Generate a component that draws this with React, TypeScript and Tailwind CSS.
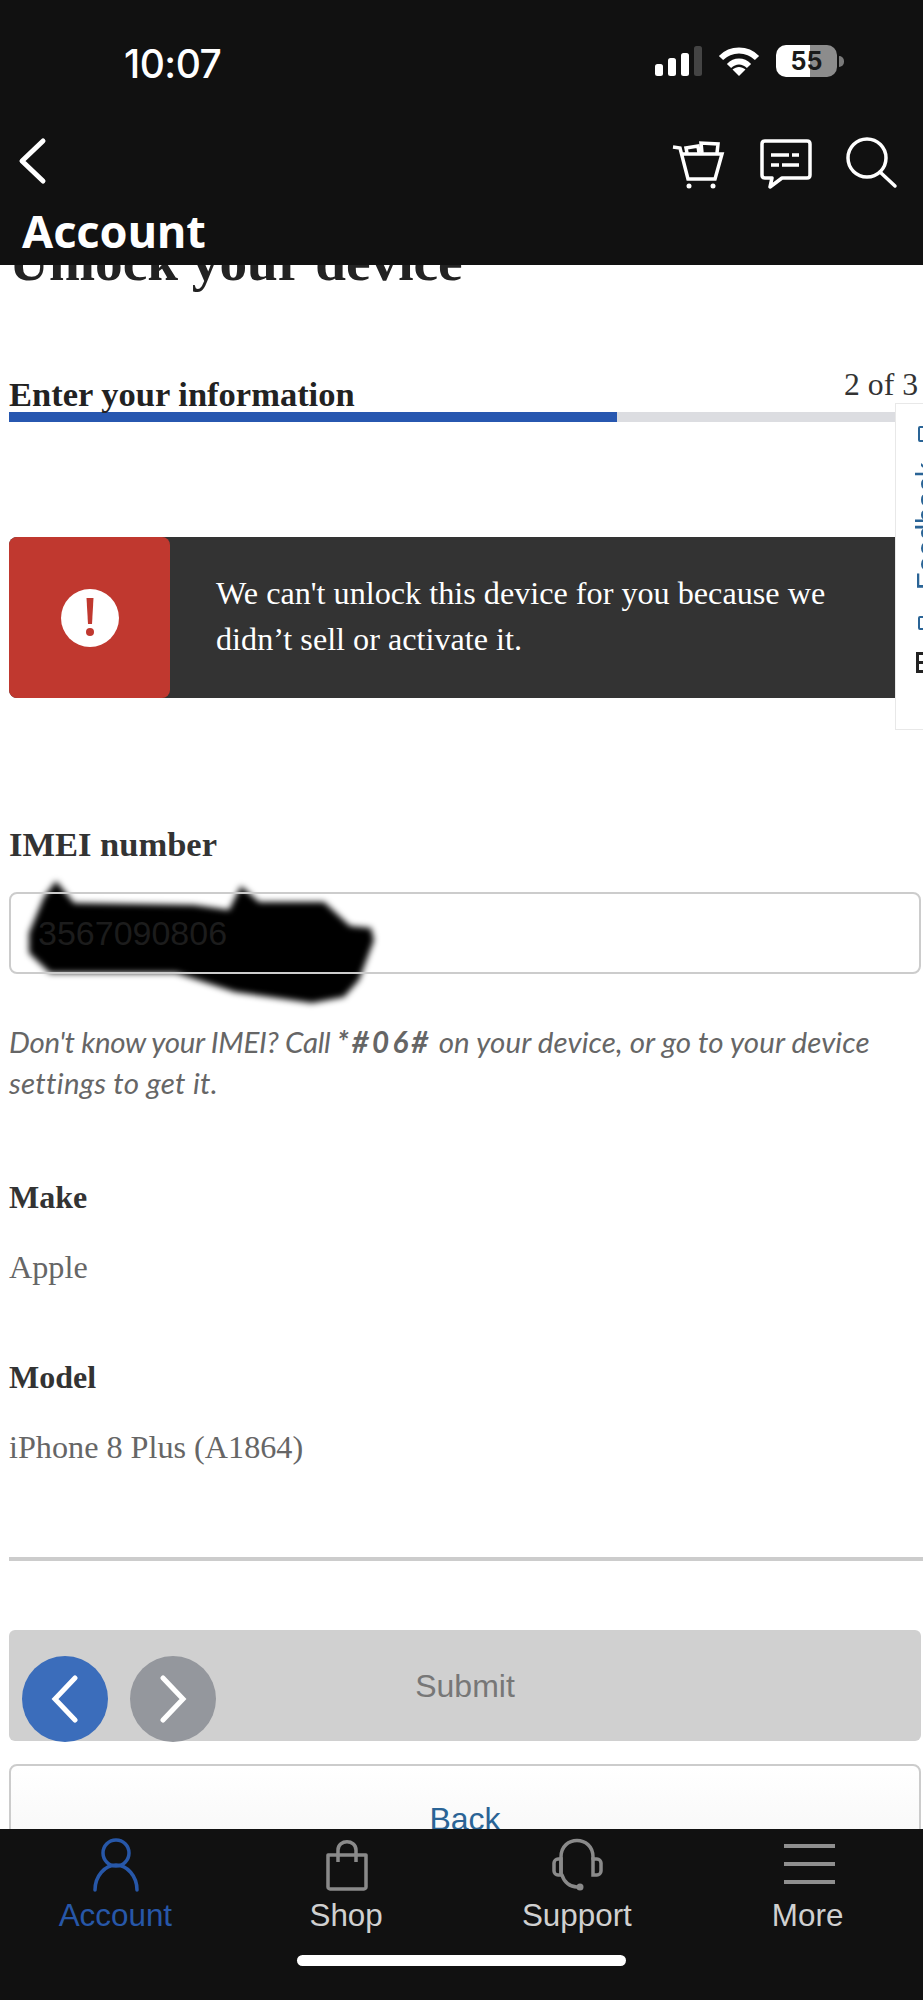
const serif = "font-['Liberation_Serif',serif]";

function StatusIcons() {
  return (
    <div className="flex items-start">
      <svg width="48" height="31" viewBox="0 0 48 31" className="mt-[1px]" fill="#fff">
        <rect x="0" y="18" width="8" height="12" rx="2.5" />
        <rect x="13" y="12" width="8" height="18" rx="2.5" />
        <rect x="26" y="7" width="8" height="23" rx="2.5" />
        <rect x="39" y="0" width="8" height="30" rx="2.5" fill="#444" />
      </svg>
      <svg width="42" height="30" viewBox="0 0 42 30" fill="none" stroke="#fff" strokeWidth="6" className="ml-[15px] mt-[1px]">
        <path d="M3 12C13 2 29 2 39 12" />
        <path d="M11 20C17 14 25 14 31 20" />
        <path d="M14.5 23.5L21 30L27.5 23.5C23.5 20 18.500 20 14.5 23.5Z" fill="#fff" stroke="none" />
      </svg>
      <div className="ml-[16px] flex items-center">
        <div className="flex h-[32px] w-[61px] items-center justify-center rounded-[10px] bg-[linear-gradient(90deg,#fff_0,#fff_56%,#8c8c8c_56%,#8c8c8c_100%)] font-['Inter',sans-serif] text-[25px] leading-none font-bold text-[#1a1a1a]">
          55
        </div>
        <div className="ml-[2px] h-[11px] w-[5px] rounded-r-full bg-[#7a7a7a]" />
      </div>
    </div>
  );
}

function Header() {
  return (
    <header className="relative z-20 h-[265px] shrink-0 bg-[#111] text-white">
      <div className="flex items-start justify-between pt-[45px] pr-[79px] pl-[124px]">
        <span className="mt-[2px] font-['Inter',sans-serif] text-[39px] leading-[34px] font-medium tracking-[-0.5px]">10:07</span>
        <StatusIcons />
      </div>
      <div className="mt-[56px] flex items-start justify-between pr-[23px] pl-[17px]">
        <svg width="32" height="48" viewBox="0 0 32 48" fill="none" stroke="#fff" strokeWidth="5" strokeLinecap="round" strokeLinejoin="round">
          <path d="M26 4L5 24L26 44" />
        </svg>
        <div className="flex items-start">
          <svg width="56" height="54" viewBox="0 0 56 54" fill="none" stroke="#fff" strokeWidth="3.500">
            <path d="M3 10L10 11L18 42H45L52 17H12" />
            <path d="M17 16L16 11L28 9L29 16" />
            <path d="M32 16L31 6L48 7L47 16" />
            <circle cx="19" cy="49" r="2.500" fill="#fff" stroke="none" />
            <circle cx="43" cy="49" r="2.500" fill="#fff" stroke="none" />
          </svg>
          <svg width="54" height="54" viewBox="0 0 54 54" fill="none" stroke="#fff" strokeWidth="3.500" strokeLinejoin="round" className="ml-[32px]">
            <path d="M7 4H49C51 4 52 5 52 7V38C52 40 51 41 49 41H24L12 50L14 41H7C5 41 4 40 4 38V7C4 5 5 4 7 4Z" />
            <path d="M13 18H31M34 18H41M13 28H21M24 28H41" />
          </svg>
          <svg width="54" height="54" viewBox="0 0 54 54" fill="none" stroke="#fff" strokeWidth="3.500" strokeLinecap="round" className="ml-[34px]">
            <circle cx="21" cy="21" r="19" />
            <path d="M34 35L49 49" />
          </svg>
        </div>
      </div>
      <div className="mt-[15px] pl-[22px] font-['Noto_Sans',sans-serif] text-[45px] leading-[50px] font-bold">Account</div>
    </header>
  );
}

function FeedbackTab() {
  return (
    <div className="absolute top-[403px] right-0 z-10 h-[327px] w-[28px] overflow-hidden border-y border-l border-[#e8e8e8] bg-white">
      <div className="absolute top-0 bottom-0 left-[9px] flex w-[44px] rotate-180 items-center [writing-mode:vertical-rl]">
        <div className="h-[56px] shrink-0" />
        <div className="relative h-[21px] w-[22px] shrink-0 border-[3px] border-[#222]">
          <div className="absolute top-[6px] left-[12px] h-[3px] w-[6px] bg-[#222]" />
        </div>
        <div className="h-[22px] shrink-0" />
        <div className="h-[14px] w-[18px] shrink-0 rounded-[2px] border-[2.5px] border-[#2a6496]" />
        <div className="h-[26px] shrink-0" />
        <span className="font-['Liberation_Sans',sans-serif] text-[29px] leading-[44px] text-[#2a6496]">Feedback</span>
        <div className="h-[21px] shrink-0" />
        <div className="h-[16px] w-[18px] shrink-0 rounded-[2px] border-[2.5px] border-[#2a6496]" />
      </div>
    </div>
  );
}

function Scribble() {
  return (
    <svg width="370" height="145" viewBox="0 0 370 145" className="absolute top-[870px] left-[20px] blur-[3px]" fill="#000">
      <path d="M36 11L54 33L174 35L209 40L221 16L239 32L304 32L330 56L351 58L354 70L339 110L324 127L292 133L215 122L156 103L30 103L9 83L9 63L24 27Z" />
    </svg>
  );
}

function Field({ label, value }: { label: string; value: string }) {
  return (
    <>
      <div className="mt-[78px] text-[32px] leading-[32px] font-bold text-[#333]">{label}</div>
      <div className="mt-[38px] text-[32.2px] leading-[32px] text-[#666]">{value}</div>
    </>
  );
}

function Main() {
  return (
    <main className={`min-h-0 flex-1 overflow-hidden bg-white pr-[2px] pl-[9px] ${serif}`}>
      <h1 className="mt-[-31px] text-[55.3px] leading-[56px] font-bold text-[#222]">Unlock your device</h1>
      <div className="mt-[78px] flex h-[44px] items-start justify-between">
        <span className="mt-[9px] text-[34.5px] leading-[34px] font-bold text-[#222]">Enter your information</span>
        <span className="mr-[3px] text-[31.7px] leading-[34px] text-[#333]">2 of 3</span>
      </div>
      <div className="h-[10px] bg-[#dcdde1]">
        <div className="h-full w-[608px] bg-[#2757b0]" />
      </div>
      <div className="mt-[115px] flex h-[161px] rounded-l-[8px] bg-[#333] text-white">
        <div className="flex w-[161px] shrink-0 items-center justify-center rounded-[8px] bg-[#c0382f]">
          <div className="flex h-[58px] w-[58px] items-center justify-center rounded-full bg-white">
            <svg width="12" height="40" viewBox="0 0 12 40" fill="#c0382f">
              <path d="M2.500 0H9.500L8 26H4Z" />
              <circle cx="6" cy="34" r="4" />
            </svg>
          </div>
        </div>
        <p className="pt-[33px] pl-[46px] text-[32.2px] leading-[46px]">
          We can't unlock this device for you because we
          <br />
          didn’t sell or activate it.
        </p>
      </div>
      <div className="mt-[130px] text-[34.5px] leading-[32px] font-bold text-[#333]">IMEI number</div>
      <div className="relative z-10 mt-[32px] flex h-[82px] items-center rounded-[8px] border-2 border-[#ccc] pl-[27px] font-['Liberation_Sans',sans-serif] text-[34px] text-[#1c1c1c]">
        3567090806
      </div>
      <p className="mt-[47px] font-['Lato',sans-serif] text-[29.5px] leading-[41px] text-[#666] italic">
        <span className="tracking-[-0.33px]">Don't know your IMEI? Call </span>
        <b className="tracking-[3.2px]">*#06#</b>
        <span className="tracking-[0.1px]"> on your device, or go to your device</span>
        <br />
        <span className="tracking-[0.27px]">settings to get it.</span>
      </p>
      <Field label="Make" value="Apple" />
      <Field label="Model" value="iPhone 8 Plus (A1864)" />
      <div className="mt-[94px] mr-[-2px] h-[4px] bg-[#ccc]" />
      <div className="mt-[69px] flex h-[111px] items-start justify-center rounded-[6px] bg-[#d0d0d0] pt-[38px] font-['Liberation_Sans',sans-serif] text-[32px] leading-[36px] text-[#777]">
        Submit
      </div>
      <div className="mt-[23px] flex h-[110px] items-start justify-center rounded-[8px] border-2 border-[#ccc] bg-[linear-gradient(#fff,#f5f5f5)] pt-[35px] font-['Liberation_Sans',sans-serif] text-[32px] leading-[36px] text-[#2a6496]">
        Back
      </div>
    </main>
  );
}

function PageArrows() {
  return (
    <div className="absolute top-[1656px] left-[22px] z-10 flex gap-[22px]">
      <div className="flex h-[86px] w-[86px] items-center justify-center rounded-full bg-[#3b6dbb]">
        <svg width="32" height="48" viewBox="0 0 32 48" fill="none" stroke="#fff" strokeWidth="5" strokeLinecap="round">
          <path d="M26 3L6 24L26 45" />
        </svg>
      </div>
      <div className="flex h-[86px] w-[86px] items-center justify-center rounded-full bg-[#94979d]">
        <svg width="32" height="48" viewBox="0 0 32 48" fill="none" stroke="#fff" strokeWidth="5" strokeLinecap="round">
          <path d="M6 3L26 24L6 45" />
        </svg>
      </div>
    </div>
  );
}

function NavItem({ label, active, children }: { label: string; active?: boolean; children: React.ReactNode }) {
  return (
    <div className="flex flex-col items-center">
      {children}
      <span className={`mt-[6px] text-[31.4px] leading-[36px] ${active ? "text-[#2757a8]" : "text-[#d0d0d0]"}`}>{label}</span>
    </div>
  );
}

function BottomNav() {
  return (
    <nav className="relative z-20 h-[171px] shrink-0 bg-[#111] font-['Liberation_Sans',sans-serif]">
      <div className="grid grid-cols-4 pt-[8px]">
        <NavItem label="Account" active>
          <svg width="60" height="55" viewBox="0 0 60 55" fill="none" stroke="#2757a8" strokeWidth="3.500" strokeLinecap="round">
            <circle cx="31" cy="16" r="13" />
            <path d="M10 53C10 39 20 28 31 28C42 28 52 39 52 53" />
          </svg>
        </NavItem>
        <NavItem label="Shop">
          <svg width="60" height="55" viewBox="0 0 60 55" fill="none" stroke="#8a8a8a" strokeWidth="3.500" strokeLinejoin="round">
            <path d="M12 18H50V50C50 51 49 52 48 52H14C13 52 12 51 12 50Z" />
            <path d="M22 25V13C22 2 40 2 40 13V25" />
          </svg>
        </NavItem>
        <NavItem label="Support">
          <svg width="60" height="55" viewBox="0 0 60 55" fill="none" stroke="#8a8a8a" strokeWidth="3.500" strokeLinecap="round">
            <path d="M14 37V20C14 -2 46 -2 46 20V22" />
            <path d="M14 22H11C9 22 7 24 7 26V34C7 36 9 38 11 38H14Z" />
            <path d="M46 22H50C52 22 54 24 54 26V34C54 36 52 38 50 38H46Z" />
            <path d="M15 38C17 45 23 50 30 50" />
            <circle cx="33" cy="50" r="3.500" fill="#8a8a8a" stroke="none" />
          </svg>
        </NavItem>
        <NavItem label="More">
          <svg width="60" height="55" viewBox="0 0 60 55" fill="none" stroke="#8f8f8f" strokeWidth="4">
            <path d="M6 9H57M6 27H57M6 45H57" />
          </svg>
        </NavItem>
      </div>
      <div className="mt-[21px] ml-[297px] h-[11px] w-[329px] rounded-full bg-white" />
    </nav>
  );
}

export default function App() {
  return (
    <div className="relative flex h-[2000px] w-[923px] flex-col overflow-hidden bg-white">
      <Header />
      <Main />
      <BottomNav />
      <FeedbackTab />
      <Scribble />
      <PageArrows />
    </div>
  );
}
